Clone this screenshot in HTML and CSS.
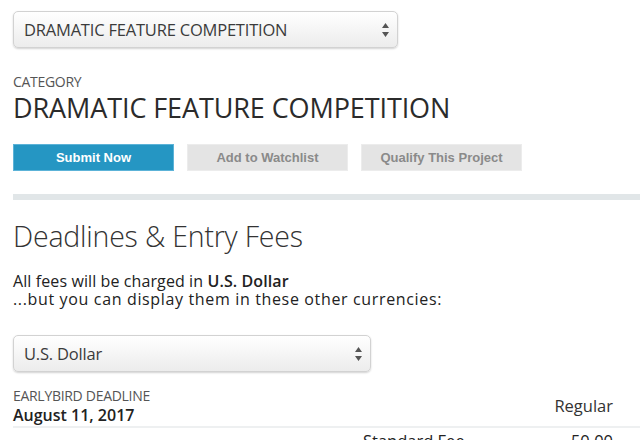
FILE: index.html
```html
<!DOCTYPE html>
<html>
<head>
<meta charset="utf-8">
<link rel="stylesheet" href="styles.css">
</head>
<body>
<div class="page">
  <div class="select select-wide">
    <span class="select-text">DRAMATIC FEATURE COMPETITION</span>
    <svg class="arrows" width="7" height="14" viewBox="0 0 7 14"><path d="M3.5 0 L7 5 L0 5 Z M0 9 L7 9 L3.5 14 Z" fill="#555"/></svg>
  </div>

  <div class="category">
    <div class="label">CATEGORY</div>
    <h1 class="title">DRAMATIC FEATURE COMPETITION</h1>
  </div>

  <div class="actions">
    <button class="btn btn-primary">Submit Now</button>
    <button class="btn btn-grey">Add to Watchlist</button>
    <button class="btn btn-grey">Qualify This Project</button>
  </div>

  <div class="divider"></div>

  <h2 class="section-title">Deadlines &amp; Entry Fees</h2>

  <p class="note">All fees will be charged in <strong>U.S. Dollar</strong><br><span class="note-sub">...but you can display them in these other currencies:</span></p>

  <div class="select select-currency">
    <span class="select-text">U.S. Dollar</span>
    <svg class="arrows" width="7" height="14" viewBox="0 0 7 14"><path d="M3.5 0 L7 5 L0 5 Z M0 9 L7 9 L3.5 14 Z" fill="#555"/></svg>
  </div>

  <div class="deadline">
    <div class="deadline-head">
      <div>
        <div class="label">EARLYBIRD DEADLINE</div>
        <div class="date">August 11, 2017</div>
      </div>
      <div class="col-head">Regular</div>
    </div>
    <div class="fee-row">
      <span class="fee-name">Standard Fee</span>
      <span class="fee-amount">50.00</span>
    </div>
  </div>
</div>
</body>
</html>
```

FILE: styles.css
```css
* { box-sizing: border-box; }
html, body { margin: 0; padding: 0; background: #fff; }
body {
  font-family: "Open Sans", "DejaVu Sans", sans-serif;
  color: #333;
  overflow: hidden;
}
.page {
  padding: 11px 0 0 13px;
}
.select {
  display: flex;
  align-items: center;
  justify-content: space-between;
  height: 37px;
  border: 1px solid #d2d2d2;
  border-radius: 5px;
  background: linear-gradient(#ffffff, #ececec);
  box-shadow: 0 1px 2px rgba(0,0,0,0.18);
  padding: 0 8px 0 10px;
}
.select-wide { width: 385px; }
.select-currency { width: 358px; margin-top: 27px; }
.select-text {
  font-size: 16.5px;
  color: #3b3b3b;
  letter-spacing: -0.2px;
}
.arrows { display: block; }

.category { margin-top: 26px; }
.label {
  font-size: 14px;
  color: #555;
  line-height: 16px;
  letter-spacing: -0.3px;
}
.title {
  margin: 2px 0 0;
  font-size: 27px;
  font-weight: 400;
  line-height: 32px;
  color: #2b2b2b;
  letter-spacing: -0.1px;
}
.actions {
  display: flex;
  gap: 13px;
  margin-top: 20px;
}
.btn {
  width: 161px;
  height: 27px;
  border: 1px solid transparent;
  font-family: "Liberation Sans", Arial, sans-serif;
  font-weight: bold;
  font-size: 13px;
  padding: 0;
}
.btn-primary {
  background: #2596c3;
  border-color: #5cb3d8;
  color: #fff;
}
.btn-grey {
  background: #e4e4e4;
  border-color: #ececec;
  color: #8a8a8a;
}
.divider {
  height: 6px;
  background: #e1e6e8;
  margin-top: 23px;
}
.section-title {
  margin: 18px 0 0;
  font-size: 28.5px;
  font-weight: 300;
  line-height: 36px;
  color: #333;
  letter-spacing: -0.2px;
}
.note {
  margin: 18px 0 0;
  font-size: 16px;
  line-height: 18px;
  color: #222;
  letter-spacing: 0.1px;
}
.note-sub { letter-spacing: 0.65px; }
.note strong { font-weight: 600; }

.deadline { margin-top: 16px; }
.deadline-head {
  display: flex;
  justify-content: space-between;
  align-items: flex-end;
  padding-right: 27px;
  border-bottom: 2px solid #eef0f1;
}
.date {
  font-size: 16px;
  font-weight: 600;
  color: #222;
  line-height: 22px;
}
.col-head {
  font-size: 16.5px;
  color: #333;
  margin-bottom: 9px;
}
.fee-row {
  display: flex;
  justify-content: space-between;
  padding: 1px 27px 0 350px;
  font-size: 16.5px;
  color: #222;
}
```
